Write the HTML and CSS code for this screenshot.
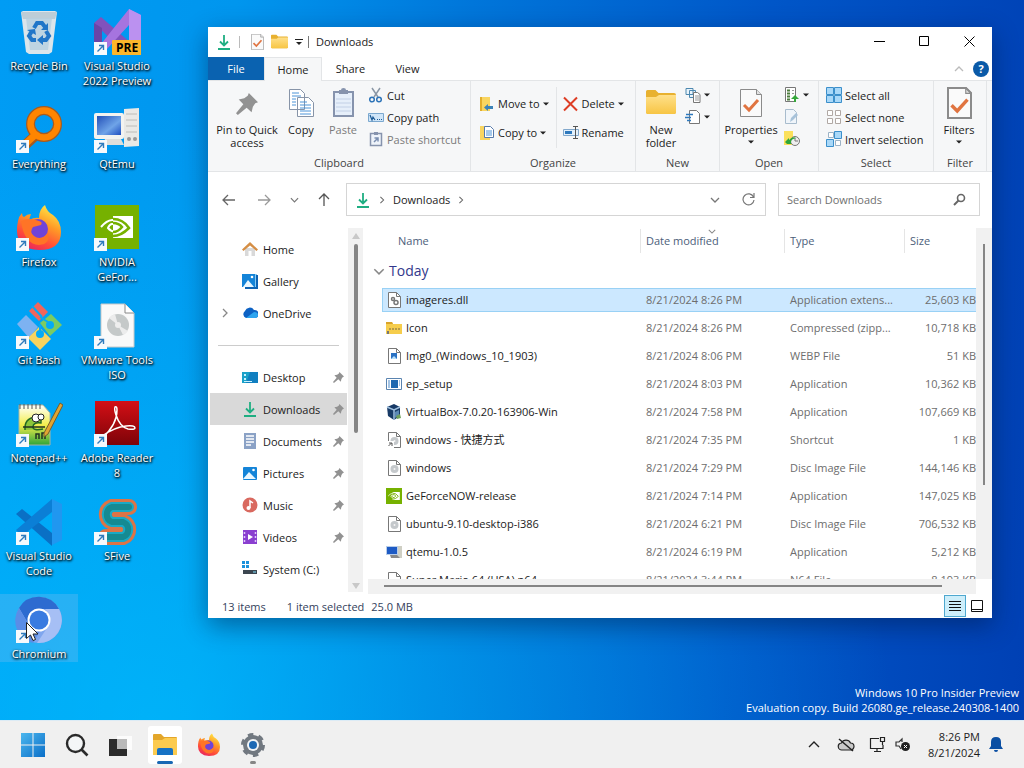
FILE: index.html
```
<!DOCTYPE html>
<html lang="en">
<head>
<meta charset="UTF-8">
<meta name="viewport" content="width=device-width, initial-scale=1.0">
<title>Desktop</title>
<link rel="stylesheet" href="styles.css">
</head>
<body>
<svg class="defs" aria-hidden="true">
  <defs>
    <linearGradient id="gFire" x1="0.8" y1="0" x2="0.3" y2="1"><stop offset="0" stop-color="#fff04a"/><stop offset=".4" stop-color="#ff9a26"/><stop offset=".75" stop-color="#ff4b3a"/><stop offset="1" stop-color="#e8265f"/></linearGradient>
    <linearGradient id="gFolder" x1="0" y1="0" x2="0" y2="1"><stop offset="0" stop-color="#ffe08a"/><stop offset="1" stop-color="#f7c544"/></linearGradient>
    <linearGradient id="gRed" x1="0" y1="0" x2="0" y2="1"><stop offset="0" stop-color="#d40f16"/><stop offset="1" stop-color="#7d0308"/></linearGradient>
    <linearGradient id="gScreen" x1="0" y1="0" x2="1" y2="1"><stop offset="0" stop-color="#2350b8"/><stop offset=".6" stop-color="#6fa4e8"/><stop offset="1" stop-color="#1f4fc0"/></linearGradient>
    <linearGradient id="gPad" x1="0" y1="0" x2="0" y2="1"><stop offset="0" stop-color="#fff"/><stop offset=".5" stop-color="#f2ee4a"/><stop offset="1" stop-color="#2ea43a"/></linearGradient>
    <linearGradient id="gWin" x1="0" y1="0" x2="1" y2="1"><stop offset="0" stop-color="#4cb7ee"/><stop offset="1" stop-color="#0b6fc8"/></linearGradient>
    <symbol id="link" viewBox="0 0 13 13"><path d="M0 0h13v13H0z" fill="#f6f9fc"/><path d="M3.500 9.500 9 4M5 3.500h4.500V8" fill="none" stroke="#2f7bbd" stroke-width="1.400"/></symbol>
    <symbol id="pin" viewBox="0 0 12 12"><path d="M7 0l5 5-1.500.6L9.200 7.500 8.500 10.500 5.800 8 1 12 0 11l4-4.800L1.500 3.500l3-.6 1.900-1.400z" fill="#929292"/></symbol>
    <symbol id="caret" viewBox="0 0 6 4"><path d="M0 .5h6L3 3.500z" fill="#222"/></symbol>
    <symbol id="down" viewBox="0 0 16 16"><path d="M8 1v10M4 7.500l4 4 4-4M2 15h12" fill="none" stroke="#1fae82" stroke-width="1.800"/></symbol>
    <symbol id="folder" viewBox="0 0 30 26"><path d="M0 2.500Q0 1 1.500 1h8l3 3H28q2 0 2 2v17q0 2-2 2H2q-2 0-2-2z" fill="#e8b130"/><path d="M0 8h10l3-2h17v17q0 2-2 2H2q-2 0-2-2z" fill="url(#gFolder)"/></symbol>
    <symbol id="check" viewBox="0 0 22 28"><path d="M.5.500h16l5 5v22H.5z" fill="#fafafa" stroke="#8b8b8b"/><path d="M16.500.500v5h5" fill="#e2e2e2" stroke="#8b8b8b"/><path d="M4 16l5 5 9-10" fill="none" stroke="#e07440" stroke-width="3"/></symbol>
    <symbol id="file" viewBox="0 0 16 16"><path d="M2.500.500h8l4 4v11h-12z" fill="#fff" stroke="#777"/><path d="M10.500.500v4h4" fill="none" stroke="#777"/></symbol>
    <symbol id="disc" viewBox="0 0 16 16"><use href="#file"/><circle cx="8.500" cy="9" r="4" fill="#c4c8cb"/><circle cx="8.500" cy="9" r="1" fill="#f3f3f3"/></symbol>
    <symbol id="chevdown" viewBox="0 0 10 6"><path d="M1 1l4 4 4-4" fill="none" stroke="currentColor" stroke-width="1.300"/></symbol>
    <symbol id="chevup" viewBox="0 0 10 6"><path d="M1 5l4-4 4 4" fill="none" stroke="currentColor" stroke-width="1.300"/></symbol>
    <symbol id="chevright" viewBox="0 0 6 10"><path d="M1 1l4 4-4 4" fill="none" stroke="currentColor" stroke-width="1.300"/></symbol>
    <symbol id="nvidia" viewBox="0 0 44 44"><path d="M0 0h44v44H0z" fill="#76b100"/><path d="M18 11h20v22H18z" fill="#fff"/><path d="M6 22q11-13 22-2-8 11-15 3 3-7 9-2" fill="none" stroke="#fff" stroke-width="2"/><path d="M18 14q10 0 16 9-8 8-16 8M18 18q6 0 9 4-4 5-9 5" fill="none" stroke="#76b100" stroke-width="2.500"/></symbol>
    <symbol id="firefox" viewBox="0 0 48 48"><path d="M3 17q1-5 4-8 0 3 2 4 3-3 7-3l-2 6q6-3 10-2 0-9 6-13 2 7 8 10 8 6 8 17 0 18-22 18Q2 45 2 27q0-6 1-10z" fill="url(#gFire)"/><circle cx="23" cy="25" r="10" fill="#7043d8"/><path d="M6 17q8-4 18 0 4 1 2 4l-8 2q-4 5 1 9 7 5 14-3 3 11-9 12Q9 40 6 17z" fill="#ff7426"/></symbol>
    <symbol id="doc" viewBox="0 0 16 16"><path d="M2 0h12v16H2z" fill="#8ba2c6"/><path d="M4 3h8M4 6h8M4 9h8M4 12h5" stroke="#fff" stroke-width="1.500"/></symbol>
    <symbol id="picture" viewBox="0 0 16 16"><rect x="1" y="2" width="14" height="13" rx="1" fill="#1484d8"/><path d="M1 14l6-7 7 7z" fill="#e9f7ff"/><circle cx="11.500" cy="5" r="1.300" fill="#fff"/></symbol>
  </defs>
</svg>

<main class="desktop">
  <nav class="icons" aria-label="Desktop icons">
    <a href="#" class="icon">
      <svg class="pic" viewBox="0 0 48 48"><path d="M6 4l2-1h32l2 1-5 40-3 2H14l-3-2z" fill="#dbe5eb"/><path d="M6 4h36l-2 7H8z" fill="#bccdd7"/><path d="M11 10h26l-4 32H15z" fill="#b5cfe0" opacity=".8"/><path d="M19 20l3-5h5l3 4M31 23l3 5-3 4h-4M21 32h-4l-3-4 3-5" fill="none" stroke="#2076c8" stroke-width="4"/><path d="M33 15v7h-7zM28 27v10l-6-5zM12 22l8-1 1 6z" fill="#2076c8"/></svg>
      <span>Recycle Bin</span>
    </a>
    <a href="#" class="icon">
      <svg class="pic" viewBox="0 0 48 48"><path d="M1 15l7-6 31 27-9 7z" fill="#8152bc"/><path d="M1 15l8 5v14l-8 5z" fill="#6a45a6"/><path d="M8 36L36 1l12 6v35l-12 5V17L14 41z" fill="#a674df"/><path d="M36 1l12 6v35l-12 5z" fill="#bb91f0"/><rect x="19" y="32" width="30" height="15" rx="1" fill="#fbb62b"/><text x="23" y="44" class="pre">PRE</text><use href="#link" x="1" y="34" width="13" height="13"/></svg>
      <span>Visual Studio 2022 Preview</span>
    </a>
    <a href="#" class="icon">
      <svg class="pic" viewBox="0 0 48 48"><path d="M21 29L7 42" stroke="#a65b20" stroke-width="10"/><circle cx="29" cy="18" r="13.500" fill="none" stroke="#a65b20" stroke-width="9"/><path d="M21 28L7 41" stroke="#ff8500" stroke-width="7"/><circle cx="29" cy="18" r="13.500" fill="none" stroke="#ff8500" stroke-width="6.500"/><use href="#link" x="1" y="34" width="13" height="13"/></svg>
      <span>Everything</span>
    </a>
    <a href="#" class="icon">
      <svg class="pic" viewBox="0 0 48 48"><path d="M31 3l15-1v38l-15 1z" fill="#e9e9e6"/><path d="M33 8h11M33 14h11M33 20h11M33 26h11" stroke="#bcbcb8"/><rect x="1" y="7" width="30" height="26" rx="2" fill="#f3f3f0"/><path d="M4 10h24v19H4z" fill="url(#gScreen)"/><path d="M12 33h16l3 6H10z" fill="#dededb"/><circle cx="36" cy="33" r="2" fill="#999"/><circle cx="42" cy="33" r="2" fill="#999"/><use href="#link" x="1" y="34" width="13" height="13"/></svg>
      <span>QtEmu</span>
    </a>
    <a href="#" class="icon">
      <svg class="pic" viewBox="0 0 48 48"><use href="#firefox"/><use href="#link" x="1" y="34" width="13" height="13"/></svg>
      <span>Firefox</span>
    </a>
    <a href="#" class="icon">
      <svg class="pic" viewBox="0 0 48 48"><use href="#nvidia" x="2" y="1" width="44" height="44"/><use href="#link" x="1" y="34" width="13" height="13"/></svg>
      <span>NVIDIA GeFor...</span>
    </a>
    <a href="#" class="icon">
      <svg class="pic" viewBox="0 0 48 48"><path d="M14 9l9-9 10 10-9 9z" fill="#f1655b"/><path d="M2 22l9-9 12 12-9 11z" fill="#7db2f1"/><path d="M25 21l11-9 11 11-12 11z" fill="#7bcb62"/><path d="M13 36l11-11 12 12-11 11z" fill="#f8d35f"/><path d="M17 4l10 11" stroke="#04aaf7" stroke-width="2"/><circle cx="35" cy="23" r="4" fill="#04aaf7"/><path d="M33 20l-8-5M25 30v-8" stroke="#04aaf7" stroke-width="2"/><circle cx="25" cy="32" r="4" fill="#04aaf7"/><use href="#link" x="1" y="34" width="13" height="13"/></svg>
      <span>Git Bash</span>
    </a>
    <a href="#" class="icon">
      <svg class="pic" viewBox="0 0 48 48"><path d="M8 2h24l9 9v34H8z" fill="#f9f9f9" stroke="#c9c9c9"/><path d="M32 2v9h9" fill="#fff" stroke="#888"/><circle cx="25" cy="23" r="11" fill="#c5c9c9"/><path d="M25 23l-9-7a11 11 0 0 1 6-4zM25 23l10 6a11 11 0 0 1-5 4z" fill="#ececec"/><circle cx="25" cy="23" r="3" fill="#eee"/><use href="#link" x="1" y="34" width="13" height="13"/></svg>
      <span>VMware Tools ISO</span>
    </a>
    <a href="#" class="icon">
      <svg class="pic" viewBox="0 0 48 48"><path d="M4 5h24l7 8v32H4z" fill="url(#gPad)" stroke="#a9b5a0"/><path d="M5 4v5M9 4v5M13 4v5M17 4v5M21 4v5M25 4v5" stroke="#555" stroke-width="1"/><path d="M10 30q-1-12 11-13 6 0 5 6-8-1-8 4 0 4 10 2" fill="#8cc63a" stroke="#226a22" stroke-width="1.500"/><circle cx="21" cy="18" r="4" fill="#fff" stroke="#222"/><circle cx="26" cy="17" r="3" fill="#fff" stroke="#222"/><path d="M8 27h22M21 39v-5h3v5M27 39v-6h3v6" stroke="#232" stroke-width="1.500" fill="none"/><path d="M29 33L45 3l3 2-15 29-4 3z" fill="#e1a531" stroke="#755c2e"/><use href="#link" x="1" y="34" width="13" height="13"/></svg>
      <span>Notepad++</span>
    </a>
    <a href="#" class="icon">
      <svg class="pic" viewBox="0 0 48 48"><path d="M2 1h44v44H2z" fill="url(#gRed)"/><path d="M9 38q15-13 15-28 0-4-2-3-1 2 1 8 4 12 12 14 7 1 7-1 0-3-9-2-11 1-24 10z" fill="none" stroke="#fff" stroke-width="1.500"/><use href="#link" x="1" y="34" width="13" height="13"/></svg>
      <span>Adobe Reader 8</span>
    </a>
    <a href="#" class="icon">
      <svg class="pic" viewBox="0 0 48 48"><path d="M1 16l6-5 30 24v13z" fill="#0a70c5"/><path d="M1 32l6 6L37 14V1z" fill="#0b7fd6"/><path d="M37 1l10 5v36l-10 5z" fill="#2097f0"/><use href="#link" x="1" y="34" width="13" height="13"/></svg>
      <span>Visual Studio Code</span>
    </a>
    <a href="#" class="icon">
      <svg class="pic" viewBox="0 0 48 48"><g fill="none" stroke-linecap="round"><path d="M36 9H19a8 8 0 0 0 0 15h11a8 8 0 0 1 0 15H13" stroke="#dc7446" stroke-width="16"/><path d="M36 9H19a8 8 0 0 0 0 15h11a8 8 0 0 1 0 15H13" stroke="#19a9c4" stroke-width="10"/><path d="M36 9H19a8 8 0 0 0 0 15h11a8 8 0 0 1 0 15H13" stroke="#158a92" stroke-width="6"/></g><use href="#link" x="1" y="34" width="13" height="13"/></svg>
      <span>SFive</span>
    </a>
    <a href="#" class="icon selected">
      <svg class="pic" viewBox="0 0 48 48"><circle cx="24" cy="24" r="23" fill="#7fa6ee"/><path d="M4 12a23 23 0 0 1 40 1H24L14 29z" fill="#2d6bd0"/><path d="M4 12l10 17 11 6-7 12A23 23 0 0 1 4 12z" fill="#5b8de6"/><path d="M44 13a23 23 0 0 1-22 34l12-18q3-9-4-16z" fill="#a6bff5"/><circle cx="24" cy="24" r="11.500" fill="#fff"/><circle cx="24" cy="24" r="9.500" fill="#3a7be0"/><use href="#link" x="1" y="34" width="13" height="13"/></svg>
      <span>Chromium</span>
    </a>
  </nav>

  <section class="window" aria-label="Downloads">
    <header class="titlebar">
      <svg width="16" height="16"><use href="#down"/></svg>
      <i class="bar"></i>
      <button class="plain" aria-label="Properties"><svg width="13" height="16"><use href="#check"/></svg></button>
      <button class="plain" aria-label="New folder"><svg width="17" height="15"><use href="#folder"/></svg></button>
      <button class="plain" aria-label="Customize toolbar"><svg width="8" height="8"><path d="M0 1.500h8" stroke="#222"/><path d="M1 4h6L4 7z" fill="#222"/></svg></button>
      <i class="bar dark"></i>
      <h1>Downloads</h1>
      <button class="caption" aria-label="Minimize"><svg width="11" height="11"><path d="M0 5.500h11" stroke="#000"/></svg></button>
      <button class="caption" aria-label="Maximize"><svg width="11" height="11"><path d="M.5.500h9v9H.5z" fill="none" stroke="#000"/></svg></button>
      <button class="caption" aria-label="Close"><svg width="11" height="11"><path d="M.5.500l10 10M10.500.500l-10 10" stroke="#000"/></svg></button>
    </header>

    <div class="tabs">
      <button class="tab file">File</button>
      <button class="tab active">Home</button>
      <button class="tab">Share</button>
      <button class="tab">View</button>
      <button class="plain collapse" aria-label="Minimize ribbon"><svg width="10" height="6"><use href="#chevup"/></svg></button>
      <button class="help" aria-label="Help">?</button>
    </div>

    <div class="ribbon">
      <div class="group clipboard">
        <div class="tools">
          <button class="big wide"><svg width="34" height="34" viewBox="0 0 34 34"><use href="#pin" x="6" y="7" width="22" height="22"/></svg>Pin to Quick access</button>
          <button class="big"><svg width="34" height="34" viewBox="0 0 34 34"><path d="M5.500 3.500h11l4 4v16h-15zM13.500 11.500h11l5 5v14h-16z" fill="#fff" stroke="#8794a8"/><path d="M8 7h7M8 10h9M8 13h4M8 16h4M8 19h4M16 16h7M16 19h11M16 22h11M16 25h11M16 28h11" stroke="#4c94d8"/></svg>Copy</button>
          <button class="big off"><svg width="34" height="34" viewBox="0 0 34 34"><path d="M8 6h19v24H8z" fill="#e6effa" stroke="#8693ad" stroke-width="2"/><path d="M13 8V4h2q0-2 2.500-2T20 4h2v4z" fill="#8693ad"/><path d="M10 13h15M10 17h15M10 21h15M10 25h15" stroke="#c2d0e6"/></svg>Paste</button>
          <div class="list">
            <button><svg width="16" height="16"><path d="M4 1l6 9M12 1l-6 9" stroke="#8b97a5" stroke-width="1.500"/><circle cx="4" cy="12.500" r="2.300" fill="none" stroke="#2e74b8" stroke-width="1.500"/><circle cx="11" cy="12.500" r="2.300" fill="none" stroke="#2e74b8" stroke-width="1.500"/></svg>Cut</button>
            <button><svg width="16" height="16"><path d="M.5 4.500h15v8H.5z" fill="#cfe5f8" stroke="#7ba8cf"/><path d="M2 6l2 5 1-3 2 3M9 10.500h1M11 10.500h1M13 10.500h1" fill="none" stroke="#1c5b96" stroke-width="1.200"/></svg>Copy path</button>
            <button class="off"><svg width="16" height="16"><path d="M2.500 2.500h11v12h-11z" fill="#eef3fa" stroke="#8693ad" stroke-width="1.500"/><path d="M6 1h4v3H6z" fill="#8693ad"/><path d="M6 11l4-4M6.500 7H10v3.500" fill="none" stroke="#7a8eb0" stroke-width="1.500"/></svg>Paste shortcut</button>
          </div>
        </div>
        <h2>Clipboard</h2>
      </div>
      <div class="group organize">
        <div class="tools">
          <div class="list two">
            <button><svg width="16" height="16"><path d="M1 1h10v14H1z" fill="#f9d560"/><path d="M1 1h2v14H1z" fill="#e2ad2b"/><path d="M14 10v3H9v2l-4-3.500L9 8v2z" fill="#3c83b8"/></svg>Move to<svg class="drop"><use href="#caret"/></svg></button>
            <button><svg width="16" height="16"><path d="M1 1h10v14H1z" fill="#f9d560"/><path d="M5.500 1.500h6l3 3v8h-9z" fill="#fff" stroke="#5579aa"/><path d="M7 6h6M7 8h6M7 10h6" stroke="#4c94d8"/></svg>Copy to<svg class="drop"><use href="#caret"/></svg></button>
          </div>
          <div class="list two split">
            <button><svg width="16" height="16"><path d="M1 1.500l13 13M14 1.500l-13 13" stroke="#dd3d24" stroke-width="2"/></svg>Delete<svg class="drop"><use href="#caret"/></svg></button>
            <button><svg width="16" height="16"><path d="M.5 4.500h15v6H.5z" fill="#e4f1fc" stroke="#83a9cc"/><path d="M2 6h7v3H2z" fill="#2e79bd"/><path d="M10 1.500h5M12.500 1.500v12M10 13.500h5" stroke="#555"/></svg>Rename</button>
          </div>
        </div>
        <h2>Organize</h2>
      </div>
      <div class="group new">
        <div class="tools">
          <button class="big"><svg width="34" height="34" viewBox="0 0 34 34"><use href="#folder" x="2" y="3" width="30" height="26"/></svg>New folder</button>
          <div class="list">
            <button aria-label="New item"><svg width="16" height="16"><path d="M1 1.500h7v6H1zM4.500 3.500h6v7h-6z" fill="#eaf4fb" stroke="#4d88b0"/><path d="M8.500 5.500h4l2.500 2v8H8.500z" fill="#fff" stroke="#777"/><path d="M10 9h4M10 11h4M10 13h4" stroke="#999"/></svg><svg class="drop"><use href="#caret"/></svg></button>
            <button aria-label="Easy access"><svg width="16" height="16"><path d="M4.500 1.500h7l3 3v10h-10z" fill="#fff" stroke="#777"/><path d="M1 5.500h7M0 8.500h6M2 11.500h4" stroke="#2e79bd" stroke-width="1.500"/></svg><svg class="drop"><use href="#caret"/></svg></button>
          </div>
        </div>
        <h2>New</h2>
      </div>
      <div class="group open">
        <div class="tools">
          <button class="big"><svg width="34" height="34" viewBox="0 0 34 34"><use href="#check" x="6" y="3" width="22" height="28"/></svg>Properties<svg class="drop"><use href="#caret"/></svg></button>
          <div class="list">
            <button aria-label="Open"><svg width="16" height="16"><path d="M1.500.500h10v14h-10z" fill="#fff" stroke="#777"/><path d="M3 3.500h3M3 6.500h3M3 9.500h3M3 12.500h3" stroke="#4d7c3e" stroke-width="2"/><path d="M8 3.500h2M8 6.500h2" stroke="#999"/><path d="M10 15v-3H7l4-4 4 4h-3v3z" fill="#35a83a"/></svg><svg class="drop"><use href="#caret"/></svg></button>
            <button aria-label="Edit"><svg width="16" height="16"><path d="M1.500.500h8l3 3v11h-11z" fill="#f0f5fa" stroke="#a8bccd"/><path d="M6 13l1-4 5-5 2 2-5 5z" fill="#a7c2d9"/></svg></button>
            <button aria-label="History"><svg width="16" height="16"><path d="M0 0h9v14H0z" fill="#fbe05b"/><circle cx="11" cy="10" r="4.500" fill="#eee" stroke="#777"/><path d="M11 7v3h3" fill="none" stroke="#777"/><path d="M1 11l4-4v2q4-4 7-2-5 1-5 4v2H3z" fill="#2fa63a"/></svg></button>
          </div>
        </div>
        <h2>Open</h2>
      </div>
      <div class="group select">
        <div class="tools">
          <div class="list">
            <button><svg width="16" height="16"><path d="M.5.500h7v7h-7zM8.500.500h7v7h-7zM.5 8.500h7v7h-7zM8.500 8.500h7v7h-7z" fill="#a9d8f8" stroke="#3b8fcb"/></svg>Select all</button>
            <button><svg width="16" height="16"><path d="M1.500 1.500h5v5h-5zM9.500 1.500h5v5h-5zM1.500 9.500h5v5h-5zM9.500 9.500h5v5h-5z" fill="#fff" stroke="#b0a8a4"/></svg>Select none</button>
            <button><svg width="16" height="16"><path d="M2.500 1.500h5v5h-5zM9.500 9.500h5v5h-5z" fill="#fff" stroke="#9cb3c6"/><path d="M8.500.500h7v7h-7zM.5 8.500h7v7h-7z" fill="#a9d8f8" stroke="#3b8fcb"/></svg>Invert selection</button>
          </div>
        </div>
        <h2>Select</h2>
      </div>
      <div class="group filter">
        <div class="tools">
          <button class="big"><svg width="34" height="34" viewBox="0 0 34 34"><use href="#check" x="5" y="1" width="25" height="32"/><path d="M6 2h18l5 5v25H6z" fill="none" stroke="#8b8b8b" stroke-width="2"/></svg>Filters<svg class="drop"><use href="#caret"/></svg></button>
        </div>
        <h2>Filter</h2>
      </div>
    </div>

    <div class="navbar">
      <button class="plain" aria-label="Back"><svg width="14" height="12"><path d="M13 6H1M6 1L1 6l5 5" fill="none" stroke="#666" stroke-width="1.300"/></svg></button>
      <button class="plain" aria-label="Forward"><svg width="14" height="12"><path d="M1 6h12M8 1l5 5-5 5" fill="none" stroke="#999" stroke-width="1.300"/></svg></button>
      <button class="plain recent" aria-label="Recent locations"><svg width="9" height="6"><use href="#chevdown"/></svg></button>
      <button class="plain" aria-label="Up"><svg width="12" height="13"><path d="M6 13V1M1 6l5-5 5 5" fill="none" stroke="#555" stroke-width="1.300"/></svg></button>
      <div class="address">
        <svg width="16" height="16"><use href="#down"/></svg>
        <svg width="6" height="8"><use href="#chevright"/></svg>
        <a href="#">Downloads</a>
        <svg width="6" height="8"><use href="#chevright"/></svg>
        <button class="plain history" aria-label="Previous locations"><svg width="10" height="6"><use href="#chevdown"/></svg></button>
        <button class="plain" aria-label="Refresh"><svg width="13" height="13"><path d="M11.500 4A5.500 5.500 0 1 0 12 7M12 0v4.500H8" fill="none" stroke="#777" stroke-width="1.200"/></svg></button>
      </div>
      <div class="search">
        <input type="search" placeholder="Search Downloads" aria-label="Search Downloads">
        <svg width="13" height="13"><circle cx="8" cy="5" r="3.500" fill="none" stroke="#666" stroke-width="1.600"/><path d="M5.500 7.500L1 12" stroke="#666" stroke-width="2"/></svg>
      </div>
    </div>

    <div class="content">
      <nav class="tree" aria-label="Folders">
        <a href="#"><svg class="ico"><path d="M3 7h10v8H3z" fill="#d9d9d9"/><path d="M6.500 10h3v5h-3z" fill="#fff"/><path d="M0 8.500L8 1l8 7.500-1.500 1.500L8 4.500 1.500 10z" fill="#d58e45"/></svg>Home</a>
        <a href="#"><svg class="ico"><path d="M4 1h11v13H4z" fill="#8acbf3"/><path d="M14 2h2v14H3v-2h11z" fill="#0d63b3"/><path d="M0 1h13v13H0z" fill="#1484d8"/><path d="M1 14l5-7 6 7z" fill="#e9f7ff"/><circle cx="10" cy="4" r="1.300" fill="#fff"/></svg>Gallery</a>
        <a href="#" class="parent"><svg class="arrow"><use href="#chevright"/></svg><svg class="ico"><path d="M4 13a4 4 0 0 1-1-7 5 5 0 0 1 9-1 4 4 0 0 1 1 8z" fill="#0d62c4"/><path d="M4 13l8-6q4 0 4 3t-3 3z" fill="#2da4ef"/></svg>OneDrive</a>
        <hr>
        <a href="#"><svg class="ico"><path d="M0 3h16v11H0z" fill="#1ba1c9"/><path d="M8 3h8v11H4z" fill="#117fc0"/><path d="M2 5h2v2H2zM2 9h2v2H2zM2 12h8v1H2z" fill="#c8f2ff"/></svg>Desktop<svg class="pinned"><use href="#pin"/></svg></a>
        <a href="#" class="current"><svg class="ico"><use href="#down"/></svg>Downloads<svg class="pinned"><use href="#pin"/></svg></a>
        <a href="#"><svg class="ico"><use href="#doc"/></svg>Documents<svg class="pinned"><use href="#pin"/></svg></a>
        <a href="#"><svg class="ico"><use href="#picture"/></svg>Pictures<svg class="pinned"><use href="#pin"/></svg></a>
        <a href="#"><svg class="ico"><circle cx="8" cy="8" r="7.500" fill="#d9695f"/><circle cx="6.500" cy="11" r="2" fill="#fff"/><path d="M8 11V4l3 2" fill="none" stroke="#fff" stroke-width="1.500"/></svg>Music<svg class="pinned"><use href="#pin"/></svg></a>
        <a href="#"><svg class="ico"><path d="M1 1h14v14H1z" fill="#8a3fd0"/><path d="M2.500 3v11M13.500 3v11" stroke="#e0c8fa" stroke-width="1.500" stroke-dasharray="2 2"/><path d="M6 5l5 3-5 3z" fill="#fff"/></svg>Videos<svg class="pinned"><use href="#pin"/></svg></a>
        <a href="#"><svg class="ico"><path d="M0 0h3v3H0zM4 0h3v3H4zM0 4h3v3H0zM4 4h3v3H4z" fill="#1b92dc"/><path d="M1 9h14v4H1z" fill="#3c4650"/><path d="M11 11h3" stroke="#7fe0ff"/></svg>System (C:)</a>
      </nav>
      <div class="vbar tree-bar">
        <svg width="8" height="6"><path d="M4 0l4 6H0z" fill="#c8c8c8"/></svg>
        <i></i>
        <svg width="8" height="6"><path d="M4 6L0 0h8z" fill="#c8c8c8"/></svg>
      </div>
      <div class="files">
        <div class="list-area">
          <div class="rows">
            <table>
              <colgroup><col><col class="c-date"><col class="c-type"><col class="c-size"></colgroup>
              <thead>
                <tr><th>Name</th><th>Date modified<svg class="sort" width="8" height="5"><use href="#chevdown"/></svg></th><th>Type</th><th>Size</th></tr>
              </thead>
              <tbody>
                <tr class="day"><td colspan="4"><svg width="12" height="7"><use href="#chevdown"/></svg>Today</td></tr>
                <tr class="chosen"><td><svg class="ico"><use href="#file"/><circle cx="7" cy="7" r="1.500" fill="none" stroke="#777" stroke-width="1.500"/><circle cx="10" cy="10.500" r="2" fill="none" stroke="#777" stroke-width="1.500"/></svg>imageres.dll</td><td>8/21/2024 8:26 PM</td><td>Application extens...</td><td>25,603 KB</td></tr>
                <tr><td><svg class="ico"><path d="M0 2h6l1 2h9v10H0z" fill="#f6cd4c"/><path d="M0 2h6l1 2H0z" fill="#d9a32a"/><path d="M3 9h11" stroke="#b59a48" stroke-width="2" stroke-dasharray="2 1"/><path d="M2 11v3" stroke="#777" stroke-width="2"/></svg>Icon</td><td>8/21/2024 8:26 PM</td><td>Compressed (zipp...</td><td>10,718 KB</td></tr>
                <tr><td><svg class="ico"><use href="#file"/><path d="M5 5h6v6H5z" fill="#2b72c4"/><path d="M5 11l3-3 3 3z" fill="#b8e0fa"/></svg>Img0_(Windows_10_1903)</td><td>8/21/2024 8:06 PM</td><td>WEBP File</td><td>51 KB</td></tr>
                <tr><td><svg class="ico"><path d="M.5 2.500h15v11H.5z" fill="#fff" stroke="#5a84b0"/><path d="M5 4h7v8H5z" fill="#2069b0"/><path d="M2 5h2M2 7h2M2 9h2M2 11h2M13 5h1M13 7h1M13 9h1" stroke="#4a8acb"/></svg>ep_setup</td><td>8/21/2024 8:03 PM</td><td>Application</td><td>10,362 KB</td></tr>
                <tr><td><svg class="ico"><path d="M1 3l7-3 6 3v9l-6 4-6-4z" fill="#183a66"/><path d="M1 3l7 3 6-3M8 6v10" fill="none" stroke="#9fc0df" stroke-width="1.500"/><path d="M9 8l4-2v5l-4 3z" fill="#5b88b5"/><path d="M10 12l4-2 1 4-4 1z" fill="#6fa05c"/></svg>VirtualBox-7.0.20-163906-Win</td><td>8/21/2024 7:58 PM</td><td>Application</td><td>107,669 KB</td></tr>
                <tr><td><svg class="ico"><use href="#disc"/><path d="M1 9h7v7H1z" fill="#fff"/><path d="M2.500 14l3-3M3 11h3v3" fill="none" stroke="#555"/></svg>windows - 快捷方式</td><td>8/21/2024 7:35 PM</td><td>Shortcut</td><td>1 KB</td></tr>
                <tr><td><svg class="ico"><use href="#disc"/></svg>windows</td><td>8/21/2024 7:29 PM</td><td>Disc Image File</td><td>144,146 KB</td></tr>
                <tr><td><svg class="ico"><use href="#nvidia"/></svg>GeForceNOW-release</td><td>8/21/2024 7:14 PM</td><td>Application</td><td>147,025 KB</td></tr>
                <tr><td><svg class="ico"><use href="#disc"/></svg>ubuntu-9.10-desktop-i386</td><td>8/21/2024 6:21 PM</td><td>Disc Image File</td><td>706,532 KB</td></tr>
                <tr><td><svg class="ico"><path d="M11 2h5v12h-5z" fill="#cfcfc4"/><path d="M0 2h12v9H0z" fill="#b8cde8"/><path d="M1 3h10v7H1z" fill="#1d5ac4"/><path d="M4 11h7l3 3H5z" fill="#888"/></svg>qtemu-1.0.5</td><td>8/21/2024 6:19 PM</td><td>Application</td><td>5,212 KB</td></tr>
                <tr><td><svg class="ico"><use href="#file"/></svg>Super Mario 64 (USA).n64</td><td>8/21/2024 3:44 PM</td><td>N64 File</td><td>8,193 KB</td></tr>
              </tbody>
            </table>
          </div>
          <div class="hbar"><i></i></div>
        </div>
        <div class="vbar file-bar"><i></i></div>
      </div>
    </div>

    <footer class="status">
      <span>13 items</span>
      <span class="count">1 item selected</span>
      <span>25.0 MB</span>
      <button class="view on" aria-label="Details"><svg width="12" height="12"><path d="M0 1.500h12M0 4.500h12M0 7.500h12M0 10.500h12" stroke="#111"/></svg></button>
      <button class="view" aria-label="Large icons"><svg width="12" height="12"><path d="M.5.500h11v11H.5zM.5 9.500h11" fill="none" stroke="#111"/></svg></button>
    </footer>
  </section>

  <p class="watermark">Windows 10 Pro Insider Preview<br>Evaluation copy. Build 26080.ge_release.240308-1400</p>
  <svg class="cursor" width="12" height="19"><path d="M.5.500v16l4-3.500 2.500 5.500 2.500-1-2.500-5.500h5z" fill="#fff" stroke="#222"/></svg>
</main>

<footer class="taskbar">
  <div class="apps">
    <button aria-label="Start"><svg width="24" height="24"><path d="M0 0h11.500v11.500H0zM12.500 0H24v11.500H12.500zM0 12.500h11.500V24H0zM12.500 12.500H24V24H12.500z" fill="url(#gWin)"/></svg></button>
    <button aria-label="Search"><svg width="24" height="24"><circle cx="10.500" cy="10.500" r="8.500" fill="#f4f6f7" stroke="#2a2a2a" stroke-width="2.400"/><path d="M16.500 16.500l6 6" stroke="#2a2a2a" stroke-width="2.600"/></svg></button>
    <button aria-label="Task view"><svg width="24" height="24"><path d="M8 3h15v14H8z" fill="#fff" opacity=".8"/><path d="M0 6h18v17H0z" fill="#2b2b2b"/><path d="M8 6h10v10H8z" fill="#b9b9b9"/></svg></button>
    <button aria-label="File Explorer" class="front"><svg width="24" height="24"><path d="M0 2q0-1 1-1h7l3 3h12q1 0 1 1v17H0z" fill="#e3a62a"/><path d="M0 7h9l3-2h12v17H0z" fill="#fccb4f"/><path d="M4 22v-5q0-2 2-2h12q2 0 2 2v5z" fill="#1672c4"/></svg></button>
    <button aria-label="Firefox"><svg width="24" height="24"><use href="#firefox"/></svg></button>
    <button aria-label="Settings" class="running"><svg width="24" height="24"><circle cx="12" cy="12" r="7.500" fill="none" stroke="#717880" stroke-width="5"/><circle cx="12" cy="12" r="10.500" fill="none" stroke="#717880" stroke-width="3" stroke-dasharray="5.500 5.500"/><circle cx="12" cy="12" r="6" fill="#f2f4f6"/><circle cx="12" cy="12" r="4" fill="#1c68b4"/></svg></button>
  </div>
  <div class="tray">
    <button class="more" aria-label="Hidden icons"><svg width="12" height="7"><path d="M1 6l5-5 5 5" fill="none" stroke="#222" stroke-width="1.400"/></svg></button>
    <button class="cloud" aria-label="OneDrive"><svg width="18" height="14"><path d="M5 12a3.500 3.500 0 0 1-.5-7 5 5 0 0 1 9 0 3.500 3.500 0 0 1 0 7z" fill="#c9c9c9" stroke="#222" stroke-width="1.200"/><path d="M2 1l14 12" stroke="#222" stroke-width="1.500"/></svg></button>
    <button aria-label="Network"><svg width="17" height="17"><path d="M10 2.500H1.500v10H14V9M5 15.500h7M8 12.500v3M11.500 1.500h4v4h-4zM13.500 5.500V9" fill="none" stroke="#222" stroke-width="1.200"/></svg></button>
    <button aria-label="Volume"><svg width="16" height="15"><path d="M6 12L4 9H1V5h3l3-3v3" fill="none" stroke="#333" stroke-width="1.200"/><circle cx="10.500" cy="9.500" r="4.500" fill="#222"/><path d="M9 8l3 3M12 8l-3 3" stroke="#fff"/></svg></button>
    <button class="clock">8:26 PM<br>8/21/2024</button>
    <button aria-label="Notifications"><svg width="14" height="15"><path d="M7 0q5 0 5 5v4l2 3H0l2-3V5q0-5 5-5zM5 13h4q0 2-2 2t-2-2z" fill="#0b4fa3"/></svg></button>
  </div>
</footer>
</body>
</html>
```
FILE: styles.css
```
* {
  box-sizing: border-box;
}
body {
  display: flex;
  flex-direction: column;
  height: 100vh;
  margin: 0;
  overflow: hidden;
  font: 11px/15px "Segoe UI", "Open Sans", "Noto Sans CJK SC", sans-serif;
  color: #1b1b1b;
}
a {
  color: inherit;
  text-decoration: none;
}
button {
  padding: 0;
  border: 0;
  background: none;
  color: inherit;
  font: inherit;
}
svg {
  display: block;
  flex: none;
}
.defs {
  position: absolute;
  width: 0;
  height: 0;
}

/* desktop */
.desktop {
  position: relative;
  flex: 1;
  min-height: 0;
  background:
    radial-gradient(ellipse at 15% 100%, rgba(0, 195, 255, 0.6), rgba(0, 160, 255, 0) 60%),
    linear-gradient(94deg, #009cf4 0%, #0096ee 22%, #0076da 44%, #0056c8 72%, #0040b4 100%);
}
.icons {
  display: grid;
  grid-template-rows: repeat(7, 98px);
  grid-template-columns: repeat(2, 78px);
  padding-top: 6px;
}
.icon {
  align-self: start;
  display: flex;
  flex-direction: column;
  align-items: center;
  padding: 2px 0 1px;
  color: #fff;
  text-align: center;
  text-shadow: 1px 1px 2px #000, 0 1px 3px #000;
}
.icon span {
  width: 76px;
  padding-top: 2px;
}
.icon.selected {
  background: rgba(130, 190, 240, 0.3);
}
.pic {
  width: 48px;
  height: 48px;
}
.pre {
  font: bold 12px "Open Sans", sans-serif;
  text-shadow: none;
}
.cursor {
  position: absolute;
  left: 26px;
  top: 622px;
}
.watermark {
  position: absolute;
  right: 5px;
  bottom: 5px;
  margin: 0;
  color: #fff;
  text-align: right;
}

/* explorer window */
.window {
  position: absolute;
  top: 27px;
  right: 32px;
  bottom: 102px;
  left: 208px;
  display: flex;
  flex-direction: column;
  background: #fff;
  box-shadow: 0 8px 24px rgba(0, 20, 60, 0.45);
}
.plain {
  display: flex;
  align-items: center;
  justify-content: center;
  color: #777;
}
.titlebar {
  display: flex;
  align-items: center;
  height: 30px;
  padding: 0 4px 1px 8px;
  gap: 7px;
}
.titlebar h1 {
  flex: 1;
  margin: 0;
  font-size: 11px;
  font-weight: normal;
}
.bar {
  width: 1px;
  height: 12px;
  margin-right: 4px;
  background: #bbb;
}
.bar.dark {
  margin: 0 0 0 -2px;
  background: #777;
}
.caption {
  display: flex;
  align-items: center;
  justify-content: center;
  width: 38px;
  height: 29px;
}
.tabs {
  display: flex;
  align-items: stretch;
  height: 24px;
  padding-right: 3px;
  border-bottom: 1px solid #e3e5e7;
}
.tab {
  width: 57px;
}
.tab.file {
  width: 56px;
  background: #0a62b0;
  color: #fff;
}
.tab.active {
  width: 58px;
  margin-bottom: -1px;
  padding-bottom: 1px;
  border: 1px solid #e3e5e7;
  border-bottom: 0;
  background: #f6f7f8;
}
.collapse {
  margin-left: auto;
  color: #bbb;
}
.help {
  align-self: center;
  width: 16px;
  height: 16px;
  margin-left: 9px;
  border-radius: 50%;
  background: #0a5aa8;
  color: #fff;
  font-weight: bold;
}

.ribbon {
  display: flex;
  height: 91px;
  border-bottom: 1px solid #e3e5e7;
  background: #f6f7f8;
}
.group {
  display: flex;
  flex-direction: column;
  border-right: 1px solid #e3e5e7;
}
.group h2 {
  margin: 0;
  font-size: 11px;
  font-weight: normal;
  line-height: 16px;
  text-align: center;
  color: #444;
}
.tools {
  display: flex;
  flex: 1;
}
.big {
  display: flex;
  flex-direction: column;
  align-items: center;
  justify-content: flex-start;
  width: 42px;
  padding-top: 5px;
  line-height: 13px;
}
.big > svg:first-child {
  margin-bottom: 3px;
}
.big.wide {
  width: 66px;
}
.off {
  color: #7a7a7a;
}
.drop {
  width: 6px;
  height: 4px;
}
.big .drop {
  margin-top: 4px;
}
.list {
  display: flex;
  flex-direction: column;
  padding-top: 3px;
}
.list button {
  display: flex;
  align-items: center;
  height: 22px;
  gap: 3px;
  white-space: nowrap;
}
.list.two {
  padding-top: 8px;
}
.list.two button {
  height: 29px;
}
.list.split {
  margin: 6px 0 7px 7px;
  padding: 2px 0 0 6px;
  border-left: 1px solid #e3e5e7;
}
.clipboard {
  width: 263px;
}
.clipboard .tools {
  padding-left: 6px;
}
.clipboard .list {
  padding-left: 4px;
}
.organize {
  width: 165px;
}
.organize .tools {
  padding-left: 8px;
}
.new {
  width: 84px;
}
.new .tools {
  padding-left: 4px;
}
.new .big {
  margin-right: 3px;
}
.open {
  width: 99px;
}
.open .tools {
  padding-left: 3px;
}
.open .big {
  width: 56px;
  margin-right: 5px;
}
.select {
  width: 115px;
}
.select .tools {
  padding-left: 7px;
}
.filter {
  width: 53px;
}
.filter .tools {
  padding-left: 4px;
}

/* address row */
.navbar {
  display: flex;
  align-items: center;
  height: 53px;
  padding: 2px 12px 0 14px;
  gap: 21px;
}
.navbar .recent {
  margin: 0 -2px;
}
.address,
.search {
  display: flex;
  align-items: center;
  height: 33px;
  border: 1px solid #d5d5d5;
}
.address {
  flex: 1;
  margin: 0 -9px 0 -5px;
  padding: 0 10px 0 8px;
  gap: 8px;
  color: #666;
}
.address a {
  color: #1b1b1b;
}
.address .history {
  margin: 0 14px 0 auto;
}
.search {
  width: 202px;
  padding: 0 13px 0 8px;
}
.search input {
  flex: 1;
  min-width: 0;
  padding: 0;
  border: 0;
  outline: 0;
  background: none;
  font: inherit;
}
.search input::placeholder {
  color: #707070;
}

/* folder tree and file list */
.content {
  display: flex;
  flex: 1;
  min-height: 0;
}
.tree {
  width: 139px;
  padding: 8px 0 0 2px;
}
.tree a {
  display: flex;
  align-items: center;
  height: 32px;
  padding: 0 3px 0 32px;
  gap: 5px;
}
.tree a.parent {
  gap: 0;
  padding-left: 12px;
}
.tree .parent .ico {
  margin: 0 5px 0 14px;
}
.tree hr {
  height: 1px;
  margin: 16px 8px 15px;
  border: 0;
  background: #ccc;
}
.tree .current {
  background: #d9d9d9;
}
.ico {
  width: 16px;
  height: 16px;
}
.arrow {
  width: 6px;
  height: 10px;
  color: #888;
}
.pinned {
  width: 11px;
  height: 11px;
  margin-left: auto;
}
.vbar {
  display: flex;
  flex-direction: column;
  align-items: center;
  background: #f1f1f1;
}
.vbar i {
  background: #858585;
}
.tree-bar {
  width: 15px;
  margin: 3px 0 2px 1px;
  padding: 5px 0 3px;
}
.tree-bar i {
  width: 4px;
  height: 53%;
  margin: 5px 0 auto;
  border-radius: 2px;
}
.files {
  display: flex;
  flex: 1;
  min-width: 0;
  padding-left: 5px;
}
.list-area {
  display: flex;
  flex: 1;
  flex-direction: column;
  min-width: 0;
}
.rows {
  flex: 1;
  min-height: 0;
  padding-left: 14px;
  overflow: hidden;
}
table {
  width: 100%;
  table-layout: fixed;
  border-spacing: 0 4px;
}
.c-date {
  width: 144px;
}
.c-type {
  width: 120px;
}
.c-size {
  width: 72px;
}
th {
  position: relative;
  height: 24px;
  padding: 0 0 2px 5px;
  border-left: 1px solid #e5e5e5;
  font-weight: normal;
  text-align: left;
  color: #4c607a;
}
th:first-child {
  padding-left: 16px;
  border-left: 0;
}
.sort {
  position: absolute;
  top: 0;
  left: 67px;
  color: #888;
}
td {
  height: 24px;
  padding: 0 0 0 6px;
  border: 1px solid transparent;
  border-width: 1px 0;
  line-height: 22px;
  color: #6d6d6d;
  white-space: nowrap;
}
td:first-child {
  padding-left: 4px;
  color: #1b1b1b;
}
td:last-child {
  padding: 0;
  text-align: right;
}
td .ico {
  float: left;
  margin: 3px 4px 3px 0;
}
.day td:first-child {
  height: 27px;
  padding: 1px 0 0 7px;
  color: #32388c;
  font-size: 14px;
  text-align: left;
}
.day svg {
  float: left;
  margin: 8px 4px 0 -16px;
  color: #888;
}
.chosen td {
  border-color: #99d1f5;
  background: #cce8ff;
}
.chosen td:first-child {
  border-left-width: 1px;
  padding-left: 3px;
}
.hbar {
  height: 15px;
  padding: 6px 34px 0 16px;
  background: #f1f1f1;
}
.hbar i {
  display: block;
  height: 2px;
  background: #858585;
}
.file-bar {
  width: 16px;
  margin: 3px 0 15px;
  padding-top: 16px;
}
.file-bar i {
  width: 2px;
  height: 72%;
}

.status {
  display: flex;
  align-items: center;
  height: 24px;
  padding: 0 4px 0 14px;
  color: #33415c;
}
.count {
  margin: 0 7px 0 21px;
}
.view {
  display: flex;
  align-items: center;
  justify-content: center;
  width: 22px;
  height: 22px;
}
.view.on {
  margin-left: auto;
  border: 1px solid #4fa8cf;
  background: #cdeefa;
}

/* taskbar */
.taskbar {
  display: flex;
  justify-content: space-between;
  height: 48px;
  border-top: 1px solid #dcebf5;
  background: #f0f0f0;
}
.apps {
  display: flex;
  align-items: center;
  padding-left: 16px;
  gap: 10px;
}
.apps button {
  position: relative;
  display: flex;
  align-items: center;
  justify-content: center;
  width: 34px;
  height: 38px;
}
.apps .front {
  border-radius: 3px;
  background: #fff;
}
.apps .front::after,
.apps .running::after {
  position: absolute;
  bottom: 0;
  width: 16px;
  height: 3px;
  border-radius: 2px;
  background: #1767b3;
  content: "";
}
.apps .running::after {
  width: 6px;
  background: #858585;
}
.tray {
  display: flex;
  align-items: center;
  padding-right: 21px;
  gap: 9px;
}
.tray .more {
  margin-right: 8px;
}
.tray .cloud {
  margin-right: 5px;
}
.tray .clock {
  width: 60px;
  line-height: 16px;
  text-align: right;
}
```
